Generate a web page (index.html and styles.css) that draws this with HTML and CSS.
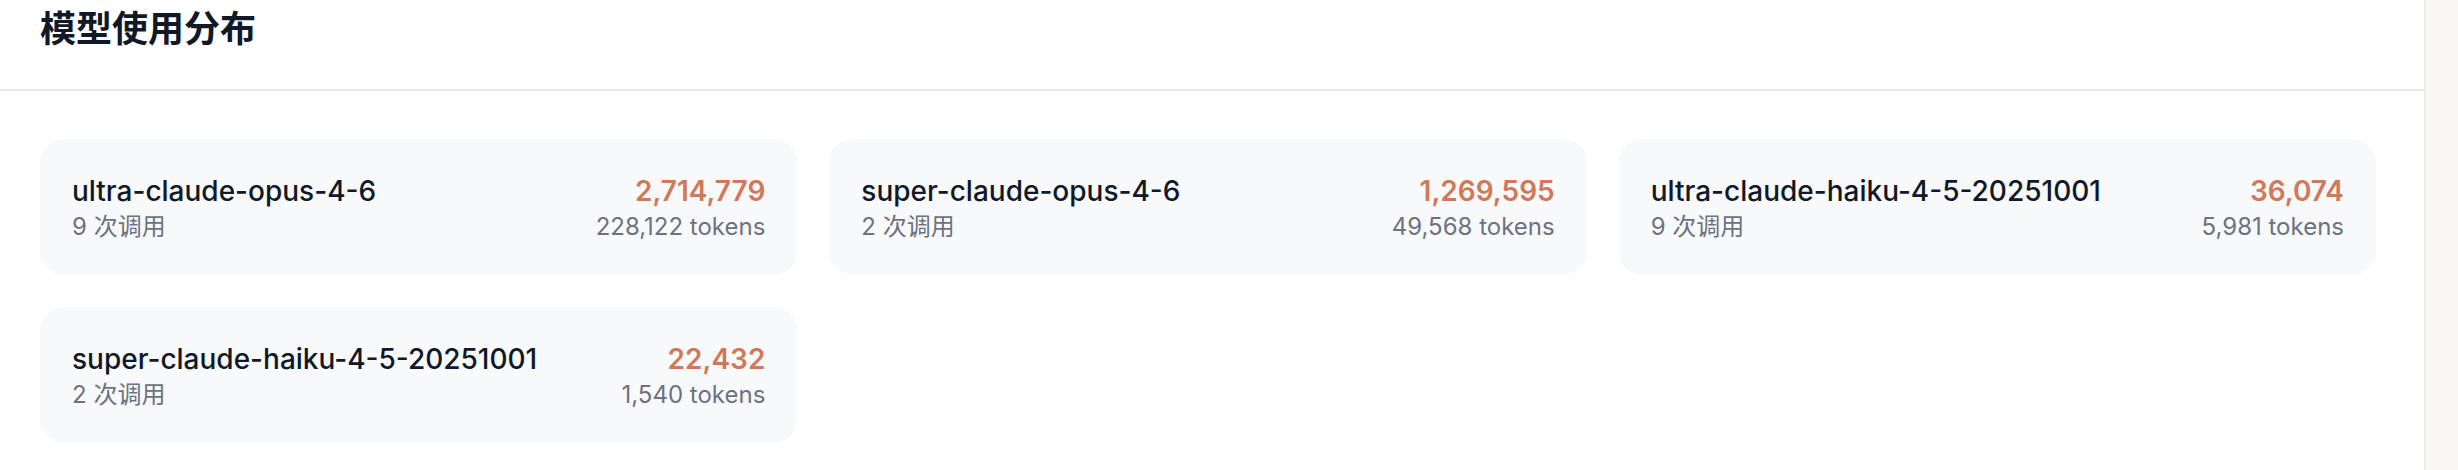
FILE: index.html
```html
<!DOCTYPE html>
<html lang="zh-CN">
<head>
<meta charset="utf-8">
<title>模型使用分布</title>
<link rel="stylesheet" href="styles.css">
</head>
<body>
  <section class="panel">
    <header class="panel-header">
      <h2 class="panel-title">模型使用分布</h2>
    </header>
    <div class="panel-body">
      <div class="model-grid">
        <div class="model-card">
          <div class="model-info">
            <div class="model-name">ultra-claude-opus-4-6</div>
            <div class="model-calls">9 次调用</div>
          </div>
          <div class="model-stats">
            <div class="model-total">2,714,779</div>
            <div class="model-tokens">228,122 tokens</div>
          </div>
        </div>
        <div class="model-card">
          <div class="model-info">
            <div class="model-name">super-claude-opus-4-6</div>
            <div class="model-calls">2 次调用</div>
          </div>
          <div class="model-stats">
            <div class="model-total">1,269,595</div>
            <div class="model-tokens">49,568 tokens</div>
          </div>
        </div>
        <div class="model-card">
          <div class="model-info">
            <div class="model-name">ultra-claude-haiku-4-5-20251001</div>
            <div class="model-calls">9 次调用</div>
          </div>
          <div class="model-stats">
            <div class="model-total">36,074</div>
            <div class="model-tokens">5,981 tokens</div>
          </div>
        </div>
        <div class="model-card">
          <div class="model-info">
            <div class="model-name">super-claude-haiku-4-5-20251001</div>
            <div class="model-calls">2 次调用</div>
          </div>
          <div class="model-stats">
            <div class="model-total">22,432</div>
            <div class="model-tokens">1,540 tokens</div>
          </div>
        </div>
      </div>
    </div>
  </section>
</body>
</html>
```

FILE: styles.css
```css
* {
  box-sizing: border-box;
}

html, body {
  margin: 0;
  padding: 0;
}

body {
  background: #f8f7f4;
  font-family: "Inter", "Noto Sans CJK SC", sans-serif;
  color: #111827;
}

.panel {
  width: 2426px;
  background: #ffffff;
  border-right: 2px solid #ebebed;
  min-height: 470px;
}

.panel-header {
  padding: 1px 48px 32px 40px;
  border-bottom: 2px solid #e6e7eb;
}

.panel-title {
  margin: 0;
  font-family: "Inter", "Noto Sans CJK SC", sans-serif;
  font-size: 36px;
  line-height: 56px;
  font-weight: 600;
  color: #111827;
}

.panel-body {
  padding: 48px 48px 48px 40px;
}

.model-grid {
  display: grid;
  grid-template-columns: repeat(3, 1fr);
  gap: 32px;
}

.model-card {
  display: flex;
  justify-content: space-between;
  align-items: center;
  padding: 32px;
  background: #f8f9fb;
  border-radius: 24px;
}

.model-info,
.model-stats {
  display: flex;
  flex-direction: column;
}

.model-stats {
  text-align: right;
  align-items: flex-end;
}

.model-name {
  font-size: 28px;
  line-height: 40px;
  font-weight: 500;
  color: #111827;
}

.model-total {
  font-size: 28px;
  line-height: 40px;
  font-weight: 600;
  color: #d17858;
}

.model-calls,
.model-tokens {
  font-size: 24px;
  line-height: 32px;
  color: #6b7280;
}
```
